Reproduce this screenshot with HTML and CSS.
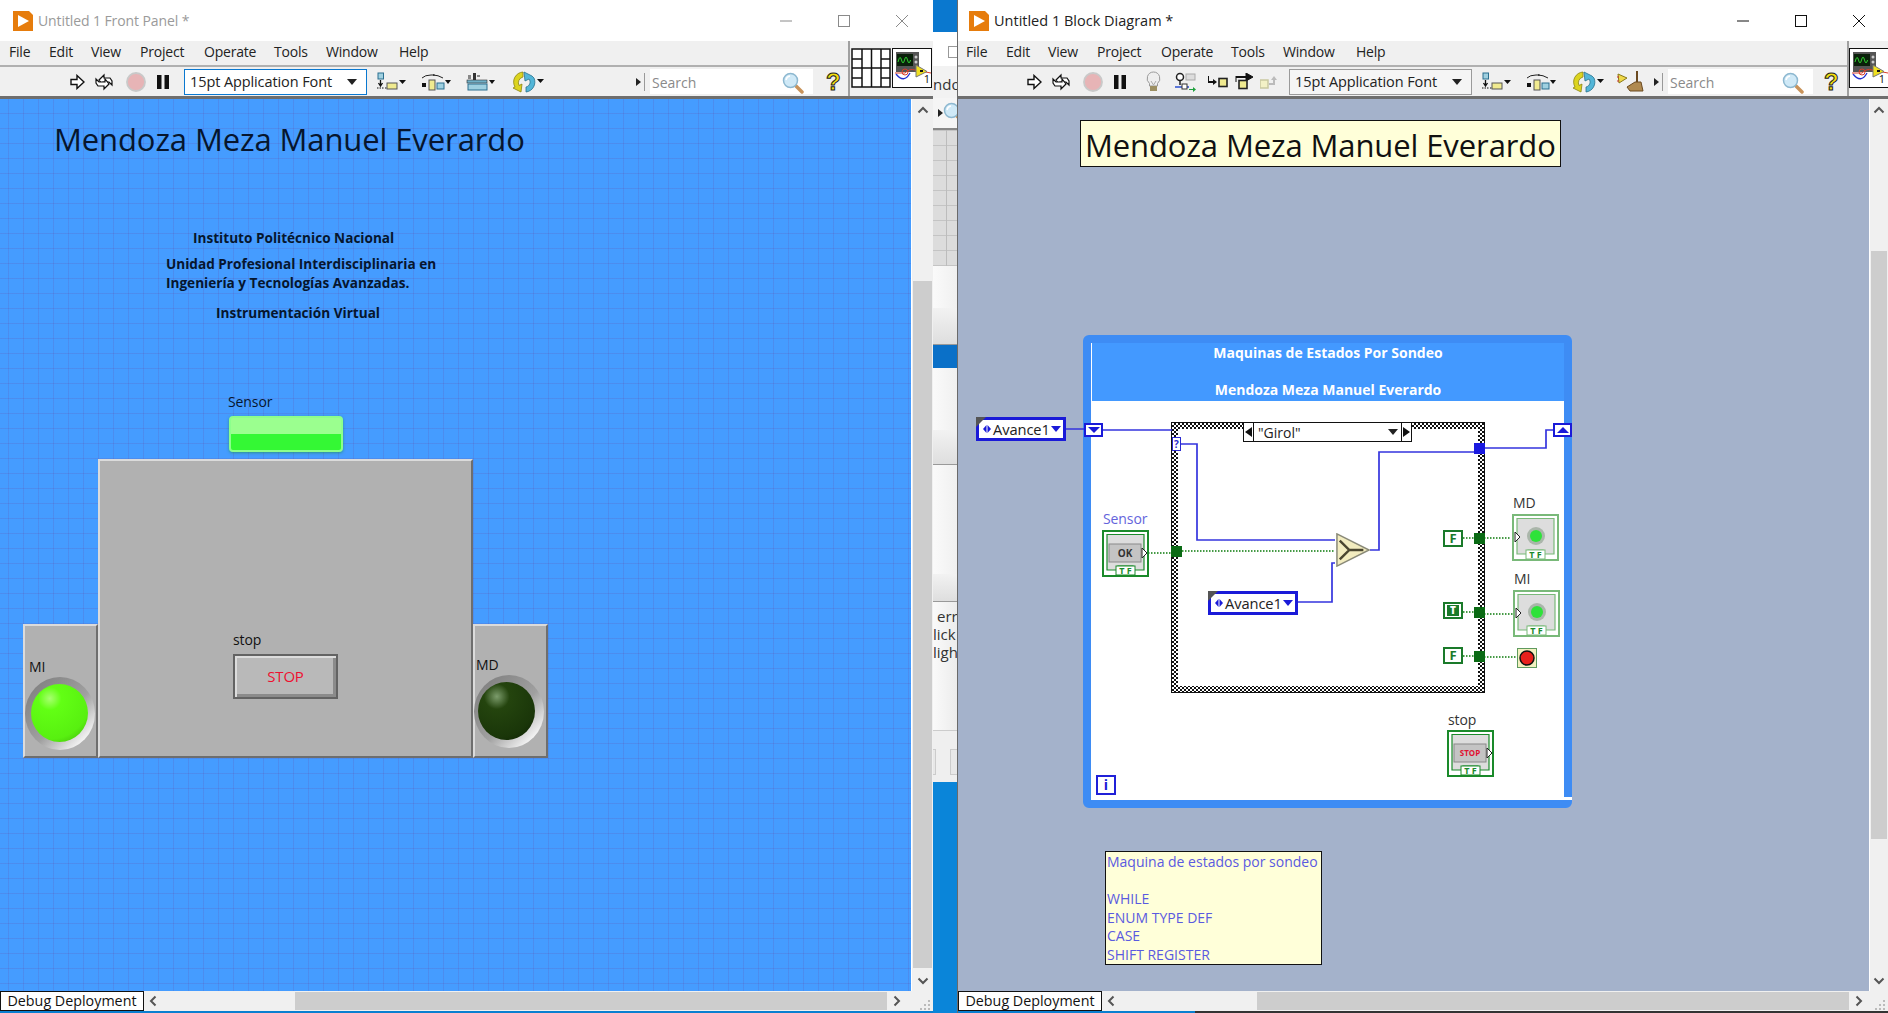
FILE: index.html
```html
<!DOCTYPE html>
<html lang="es">
<head>
    <meta charset="UTF-8">
    <title>Untitled 1</title>
    <link rel="stylesheet" href="styles.css">
</head>
<body>
    <!-- Iconos compartidos -->
    <svg class="defs">
        <symbol id="i-logo" viewBox="0 0 20 20"><path d="M0 0h16l4 4v16H0z" fill="#e67c0c"/><path d="M5 4l11 6-11 6z" fill="#fff"/></symbol>
        <symbol id="i-run" viewBox="0 0 15 16"><path d="M1 5.500h6V1.500l7 6.500-7 6.500v-4H1z" fill="#fff" stroke="#111" stroke-width="1.400"/></symbol>
        <symbol id="i-runc" viewBox="0 0 20 18"><path d="M5 7l5-5v3h6l2 3v4l-3-3H9v3z" fill="#fff" stroke="#111" stroke-width="1.200"/><path d="M15 11l-5 5v-3H4l-2-3V6l3 3h6v-3z" fill="#fff" stroke="#111" stroke-width="1.200"/></symbol>
        <symbol id="i-abort" viewBox="0 0 20 20"><circle cx="10" cy="10" r="9" fill="#e7b4b6" stroke="#c9c9c9" stroke-width="1.800"/></symbol>
        <symbol id="i-pause" viewBox="0 0 12 14"><path d="M0 0h4.500v14H0zM7.500 0H12v14H7.500z" fill="#111"/></symbol>
        <symbol id="i-align" viewBox="0 0 29 20"><rect x="1" y="1" width="5.500" height="6" fill="#9fd0e0" stroke="#2a6f8f"/><path d="M3.500 8v5M1.500 11l2 3 2-3" fill="none" stroke="#111" stroke-width="1.300"/><path d="M0 16h7M8 16h3" stroke="#111" stroke-dasharray="1.500 1"/><rect x="10" y="11" width="10" height="6" fill="#f0ea90" stroke="#555"/><path d="M22 8h7l-3.500 4z" fill="#111"/></symbol>
        <symbol id="i-dist" viewBox="0 0 30 20"><path d="M1 6q3-3 9-3t2 0q5 0 10 3" fill="none" stroke="#222"/><rect x="1" y="11" width="4" height="4" fill="#111"/><rect x="8" y="8" width="6" height="10" fill="#f0ea90" stroke="#555"/><rect x="16" y="11" width="7" height="6" fill="#9fd0e0" stroke="#2a6f8f"/><path d="M24 8h6l-3 4z" fill="#111"/></symbol>
        <symbol id="i-resize" viewBox="0 0 30 22"><rect x="7" y="2" width="3" height="7" fill="#333"/><rect x="1" y="9" width="20" height="3" fill="#6fb0c8" stroke="#333" stroke-width=".6"/><rect x="2" y="13" width="19" height="6" fill="#9fd0e0" stroke="#2a6f8f"/><path d="M23 9h6l-3 4z" fill="#111"/><path d="M2 5h3M11 5h3M2 7h3" stroke="#222"/></symbol>
        <symbol id="i-reorder" viewBox="0 0 32 22"><path d="M11 1A10 10 0 0 0 3 16l-2 1 8 4 1-8-3 1.500A6 6 0 0 1 11 6z" fill="#dcd41e" stroke="#8a8410" stroke-width=".8"/><path d="M12 1l8 4 2 2a10 10 0 0 1-8 14v-5a5 5 0 0 0 3-8l-4 2z" fill="#53b6d8" stroke="#27728e" stroke-width=".8"/><path d="M25 8h7l-3.500 4z" fill="#111"/></symbol>
        <symbol id="i-bulb" viewBox="0 0 15 21"><path d="M7.500 1a6.500 6.500 0 0 1 4 11.500V15h-8v-2.500A6.500 6.500 0 0 1 7.500 1z" fill="#eee" stroke="#999"/><path d="M5 10l2.500 4 2.500-4" fill="none" stroke="#aaa"/><rect x="4" y="15" width="7" height="5" fill="#9c8f62"/></symbol>
        <symbol id="i-retain" viewBox="0 0 21 20"><circle cx="5" cy="5" r="3.500" fill="#fff" stroke="#222" stroke-width="1.500"/><path d="M5 8.500V13" stroke="#222" stroke-width="1.500"/><rect x="11" y="2" width="9" height="6" fill="#ddd" stroke="#aaa"/><path d="M0 15h14" stroke="#2b4fd0" stroke-width="1.500"/><rect x="7" y="12" width="5" height="5" fill="#fff" stroke="#333"/><path d="M14 17h4v-2l3 2.500-3 2.500v-2h-4z" fill="#1ea03c"/></symbol>
        <symbol id="i-stepin" viewBox="0 0 20 14"><path d="M0 1v6h6" fill="none" stroke="#111" stroke-width="2"/><path d="M5 4v6l4-3z" fill="#111"/><rect x="11" y="3.500" width="8" height="8" fill="#f0ea90" stroke="#222" stroke-width="1.600"/></symbol>
        <symbol id="i-stepover" viewBox="0 0 19 17"><path d="M1 4h10" stroke="#111" stroke-width="2"/><path d="M1 3v6M11 0v8l7-4z" fill="#111" stroke="#111"/><rect x="4" y="7.500" width="8" height="8" fill="#f0ea90" stroke="#222" stroke-width="1.600"/></symbol>
        <symbol id="i-stepout" viewBox="0 0 20 14"><rect x="0" y="5" width="8" height="8" fill="#f3f1c6" stroke="#c9c8a0" stroke-width="1.500"/><path d="M9 9h5V4" fill="none" stroke="#bbb" stroke-width="2"/><path d="M11 5l3-4 3 4z" fill="#bbb"/></symbol>
        <symbol id="i-clean" viewBox="0 0 27 22"><path d="M1 3l9 4-8 5z" fill="#f0d848" stroke="#8a7a18"/><path d="M2 6l-2 0M2 10h-2" stroke="#c33"/><path d="M19 0h2v11h-2z" fill="#6b4a20"/><path d="M10 16l8-5h6l2 9H13z" fill="#b08a50" stroke="#6b4a20"/></symbol>
        <symbol id="i-mag" viewBox="0 0 22 22"><path d="M13 13l7 7" stroke="#c9935a" stroke-width="3.500" stroke-linecap="round"/><circle cx="8.500" cy="8.500" r="7" fill="#cfe9f7" stroke="#8db8d0" stroke-width="1.500"/><path d="M4 8a5 5 0 0 1 4-4" stroke="#fff" stroke-width="1.500" fill="none"/></symbol>
        <symbol id="i-left" viewBox="0 0 10 12"><path d="M7.500 1.500L3 6l4.500 4.500" fill="none" stroke="#555" stroke-width="2"/></symbol>
        <symbol id="i-right" viewBox="0 0 10 12"><path d="M2.500 1.500L7 6l-4.500 4.500" fill="none" stroke="#555" stroke-width="2"/></symbol>
        <symbol id="i-up" viewBox="0 0 12 10"><path d="M1.500 7.500L6 3l4.500 4.500" fill="none" stroke="#555" stroke-width="2"/></symbol>
        <symbol id="i-down" viewBox="0 0 12 10"><path d="M1.500 2.500L6 7l4.500-4.500" fill="none" stroke="#555" stroke-width="2"/></symbol>
        <symbol id="i-grip" viewBox="0 0 12 12"><path d="M9 1h2v2H9zM5 5h2v2H5zM9 5h2v2H9zM1 9h2v2H1zM5 9h2v2H5zM9 9h2v2H9z" fill="#bbb"/></symbol>
        <symbol id="i-vi" viewBox="0 0 40 40"><rect x=".5" y=".5" width="39" height="39" fill="#fff" stroke="#111"/><rect x="4" y="4" width="23" height="20" fill="#555"/><rect x="5" y="6" width="16" height="12" fill="#0a200a"/><path d="M6 14q2-8 3.500-2t3 0 3 0 3 0" fill="none" stroke="#2fd02f"/><circle cx="24" cy="9" r="1.500" fill="#ccc"/><circle cx="24" cy="14" r="1.500" fill="#ccc"/><path d="M4 26q8 10 14-1" fill="none" stroke="#2230d0" stroke-width="1.300"/><path d="M3 25h10q5-5 10-3l16 3" fill="none" stroke="#d8402a"/><circle cx="13" cy="24" r="3" fill="none" stroke="#d8402a"/><path d="M24 17l11 6.500L24 29z" fill="#f0e020" stroke="#777"/><path d="M28 22h3v2h-3z" fill="#111"/></symbol>
        <symbol id="i-cp" viewBox="0 0 40 40"><path d="M1 1h38v38H1zM11 1v38M20.500 1v38M30 1v38M1 20h38M1 11h10M1 30h10M30 11h9M30 30h9" fill="#fff" stroke="#111" stroke-width="1.500"/></symbol>
        <symbol id="i-frame" viewBox="0 0 47 47"><rect x="1" y="1" width="45" height="45" fill="#fff" stroke="currentColor" stroke-width="2"/><path d="M5 4.500h37V40H31v-4H16v4H5z" fill="#ddd" stroke="currentColor" stroke-width="1.200"/><rect x="14" y="36" width="19" height="9" fill="#fff" stroke="currentColor"/></symbol>
        <symbol id="i-enumarrows" viewBox="0 0 8 8"><path d="M3.500 0v8L0 4zM4.500 0v8L8 4z" fill="#1a1ad8"/></symbol>
    </svg>

    <!-- Front Panel -->
    <div class="window window-fp">
        <div class="titlebar">
            <svg class="logo"><use href="#i-logo"/></svg>
            <span class="title-text">Untitled 1 Front Panel *</span>
            <div class="win-controls">
                <svg width="14" height="14"><path d="M1 7h12" stroke="currentColor"/></svg>
                <svg width="14" height="14"><rect x="1.500" y="1.500" width="11" height="11" fill="none" stroke="currentColor"/></svg>
                <svg width="14" height="14"><path d="M1 1l12 12M13 1L1 13" stroke="currentColor"/></svg>
            </div>
        </div>
        <div class="head">
            <div class="head-main">
                <div class="menubar">
                    <span>File</span><span>Edit</span><span>View</span><span>Project</span><span>Operate</span><span>Tools</span><span>Window</span><span>Help</span>
                </div>
                <div class="toolbar">
                    <svg class="t-run"><use href="#i-run"/></svg>
                    <svg class="t-runc"><use href="#i-runc"/></svg>
                    <svg class="t-abort"><use href="#i-abort"/></svg>
                    <svg class="t-pause"><use href="#i-pause"/></svg>
                    <div class="ring ring-active"><span>15pt Application Font</span><i class="caret"></i></div>
                    <svg class="t-align"><use href="#i-align"/></svg>
                    <svg class="t-dist"><use href="#i-dist"/></svg>
                    <svg class="t-resize"><use href="#i-resize"/></svg>
                    <svg class="t-reorder"><use href="#i-reorder"/></svg>
                    <i class="more"></i>
                    <i class="divider"></i>
                    <div class="search"><span>Search</span><svg><use href="#i-mag"/></svg></div>
                    <span class="help">?</span>
                </div>
            </div>
            <div class="head-icons">
                <svg class="cp"><use href="#i-cp"/></svg>
                <svg class="vi"><use href="#i-vi"/></svg>
                <span class="vi-num">1</span>
            </div>
        </div>
        <div class="work">
            <div class="canvas panel">
                <div class="pn big-title">Mendoza Meza Manuel Everardo</div>
                <div class="pn info info-a">Instituto Politécnico Nacional</div>
                <div class="pn info info-b">Unidad Profesional Interdisciplinaria en<br>Ingeniería y Tecnologías Avanzadas.</div>
                <div class="pn info info-c">Instrumentación Virtual</div>

                <div class="pn lbl lbl-sensor">Sensor</div>
                <div class="pn sensor-btn"></div>

                <div class="pn box box-main"></div>
                <div class="pn box box-mi"></div>
                <div class="pn box box-md"></div>

                <div class="pn lbl lbl-stop">stop</div>
                <div class="pn stop-btn">STOP</div>

                <div class="pn led led-on led-mi"></div>
                <div class="pn lbl lbl-mi">MI</div>
                <div class="pn led led-off led-md"></div>
                <div class="pn lbl lbl-md">MD</div>
            </div>
            <div class="vscroll">
                <svg class="chev"><use href="#i-up"/></svg>
                <div class="vthumb"></div>
                <svg class="chev"><use href="#i-down"/></svg>
            </div>
        </div>
        <div class="bottombar">
            <div class="tab">Debug Deployment</div>
            <svg class="hchev"><use href="#i-left"/></svg>
            <div class="hthumb"></div>
            <svg class="hchev"><use href="#i-right"/></svg>
            <svg class="grip"><use href="#i-grip"/></svg>
        </div>
    </div>

    <!-- Ventana de atrás -->
    <div class="behind">
        <div class="bh bh-blue bh-h32"></div>
        <div class="bh bh-top"><i class="bh-max"></i></div>
        <div class="bh bh-ndo">ndo</div>
        <div class="bh bh-tools"><i class="more"></i><svg><use href="#i-mag"/></svg></div>
        <div class="bh bh-grid"></div>
        <div class="bh bh-white bh-h42"></div>
        <div class="bh bh-gray bh-h37"></div>
        <div class="bh bh-sel"></div>
        <div class="bh bh-white bh-h62"></div>
        <div class="bh bh-gray bh-h35"></div>
        <div class="bh bh-white bh-h109"></div>
        <div class="bh bh-gray bh-h28"></div>
        <div class="bh bh-text"><span class="t-err">err</span><span>lick</span><span>ligh</span></div>
        <div class="bh bh-btns"><i></i><i></i></div>
        <div class="bh bh-task"></div>
    </div>

    <!-- Block Diagram -->
    <div class="window window-bd">
        <div class="titlebar">
            <svg class="logo"><use href="#i-logo"/></svg>
            <span class="title-text">Untitled 1 Block Diagram *</span>
            <div class="win-controls">
                <svg width="14" height="14"><path d="M1 7h12" stroke="currentColor"/></svg>
                <svg width="14" height="14"><rect x="1.500" y="1.500" width="11" height="11" fill="none" stroke="currentColor"/></svg>
                <svg width="14" height="14"><path d="M1 1l12 12M13 1L1 13" stroke="currentColor"/></svg>
            </div>
        </div>
        <div class="head">
            <div class="head-main">
                <div class="menubar">
                    <span>File</span><span>Edit</span><span>View</span><span>Project</span><span>Operate</span><span>Tools</span><span>Window</span><span>Help</span>
                </div>
                <div class="toolbar">
                    <svg class="t-run"><use href="#i-run"/></svg>
                    <svg class="t-runc"><use href="#i-runc"/></svg>
                    <svg class="t-abort"><use href="#i-abort"/></svg>
                    <svg class="t-pause"><use href="#i-pause"/></svg>
                    <svg class="t-bulb"><use href="#i-bulb"/></svg>
                    <svg class="t-retain"><use href="#i-retain"/></svg>
                    <svg class="t-stepin"><use href="#i-stepin"/></svg>
                    <svg class="t-stepover"><use href="#i-stepover"/></svg>
                    <svg class="t-stepout"><use href="#i-stepout"/></svg>
                    <div class="ring"><span>15pt Application Font</span><i class="caret"></i></div>
                    <svg class="t-align"><use href="#i-align"/></svg>
                    <svg class="t-dist"><use href="#i-dist"/></svg>
                    <svg class="t-reorder"><use href="#i-reorder"/></svg>
                    <svg class="t-clean"><use href="#i-clean"/></svg>
                    <i class="more"></i>
                    <i class="divider"></i>
                    <div class="search"><span>Search</span><svg><use href="#i-mag"/></svg></div>
                    <span class="help">?</span>
                </div>
            </div>
            <div class="head-icons">
                <svg class="vi"><use href="#i-vi"/></svg>
                <span class="vi-num">1</span>
            </div>
        </div>
        <div class="work">
            <div class="canvas diagram">
                <div class="pn note-title">Mendoza Meza Manuel Everardo</div>

                <div class="pn loop">
                    <div class="loop-head">
                        <div>Maquinas de Estados Por Sondeo</div>
                        <div>Mendoza Meza Manuel Everardo</div>
                    </div>
                </div>
                <div class="pn loop-i">i</div>
                <div class="pn case"><div class="case-in"></div></div>

                <svg class="wires" viewBox="958 99 912 892">
                    <g class="wire-enum">
                        <path d="M1066 429h18M1103 430h69M1181 444h16v96h138M1370 550h9v-98h95M1484 448h62v-18h7M1298 602h34v-39h3"/>
                    </g>
                    <g class="wire-bool">
                        <path d="M1148 553h23M1182 551h153M1463 538h11M1484 538h27M1463 612h11M1484 614h29M1463 656h11M1484 657h33"/>
                    </g>
                </svg>

                <div class="pn sel"><i class="sel-l"></i><span>"Girol"</span><i class="caret"></i><i class="sel-r"></i></div>
                <div class="pn sel-term">?</div>

                <div class="pn enum enum-out"><svg><use href="#i-enumarrows"/></svg><span>Avance1</span><i class="caret caret-blue"></i></div>
                <div class="pn enum enum-in"><svg><use href="#i-enumarrows"/></svg><span>Avance1</span><i class="caret caret-blue"></i></div>

                <div class="pn sr sr-l"><i class="sr-down"></i></div>
                <div class="pn sr sr-r"><i class="sr-up"></i></div>

                <i class="pn tun tun-bool tun-sensor"></i>
                <i class="pn tun tun-enum tun-out"></i>
                <i class="pn tun tun-bool tun-f1"></i>
                <i class="pn tun tun-bool tun-t"></i>
                <i class="pn tun tun-bool tun-f2"></i>

                <div class="pn const c-f1">F</div>
                <div class="pn const const-t c-t"><b>T</b></div>
                <div class="pn const c-f2">F</div>

                <svg class="pn select-node" viewBox="0 0 36 36">
                    <path d="M1 1l34 17L1 35z" fill="#f2ecbf" stroke="#8a8a78" stroke-width="1.600"/>
                    <path d="M4 8l10 10-10 10M14 18h15" fill="none" stroke="#4a4630" stroke-width="2.600"/>
                </svg>

                <div class="pn lbl-bd lbl-bd-sensor">Sensor</div>
                <svg class="pn term term-ctl t-sensor"><use href="#i-frame"/><rect class="t-btn" x="7" y="14" width="32" height="18"/><text class="t-cap" x="23" y="27">OK</text><path class="t-arrow" d="M40 18l5 5-5 5z"/><text class="t-tf" x="23.500" y="44">T F</text></svg>

                <div class="pn lbl-bd lbl-bd-md">MD</div>
                <svg class="pn term term-ind t-md"><use href="#i-frame"/><circle class="t-halo" cx="24" cy="22" r="9"/><circle class="t-led" cx="24" cy="22" r="6"/><path class="t-arrow" d="M3 18l5 5-5 5z"/><text class="t-tf" x="23.500" y="44">T F</text></svg>

                <div class="pn lbl-bd lbl-bd-mi">MI</div>
                <svg class="pn term term-ind t-mi"><use href="#i-frame"/><circle class="t-halo" cx="24" cy="22" r="9"/><circle class="t-led" cx="24" cy="22" r="6"/><path class="t-arrow" d="M3 18l5 5-5 5z"/><text class="t-tf" x="23.500" y="44">T F</text></svg>

                <div class="pn lbl-bd lbl-bd-stop">stop</div>
                <svg class="pn term term-ctl t-stop"><use href="#i-frame"/><rect class="t-btn" x="7" y="14" width="32" height="18"/><text class="t-cap t-cap-red" x="23" y="26">STOP</text><path class="t-arrow" d="M40 18l5 5-5 5z"/><text class="t-tf" x="23.500" y="44">T F</text></svg>

                <svg class="pn stop-cond" viewBox="0 0 20 20">
                    <rect x=".5" y=".5" width="19" height="19" fill="#f3f1c0" stroke="#5f9a5f"/>
                    <circle cx="10" cy="10" r="7" fill="#e8201c" stroke="#111" stroke-width="1.500"/>
                </svg>

                <div class="pn comment">Maquina de estados por sondeo<br><br>WHILE<br>ENUM TYPE DEF<br>CASE<br>SHIFT REGISTER</div>
            </div>
            <div class="vscroll">
                <svg class="chev"><use href="#i-up"/></svg>
                <div class="vthumb"></div>
                <svg class="chev"><use href="#i-down"/></svg>
            </div>
        </div>
        <div class="bottombar">
            <div class="tab">Debug Deployment</div>
            <svg class="hchev"><use href="#i-left"/></svg>
            <div class="hthumb"></div>
            <svg class="hchev"><use href="#i-right"/></svg>
            <svg class="grip"><use href="#i-grip"/></svg>
        </div>
    </div>
</body>
</html>
```

FILE: styles.css
```css
* {
    box-sizing: border-box;
}

body {
    margin: 0;
    width: 1888px;
    height: 1013px;
    display: flex;
    overflow: hidden;
    background: #0a85d9;
    font-family: "Open Sans", "Noto Sans", sans-serif;
    color: #222;
}

.defs {
    display: none;
}

i {
    display: block;
}

/* Ventanas */
.window {
    display: flex;
    flex-direction: column;
    height: 1013px;
    padding-bottom: 2px;
    background: #fff;
}

.window-fp {
    width: 933px;
    background: linear-gradient(#fff 1011px, #0a7fd0 0);
}

.window-bd {
    width: 931px;
    border-left: 1px solid #6a6a6a;
    background: linear-gradient(90deg, #0a7fd0 237px, #333 0);
}

.titlebar {
    height: 41px;
    flex: none;
    display: flex;
    align-items: center;
    background: #fff;
}

.logo {
    width: 20px;
    height: 20px;
    margin-left: 13px;
}

.window-bd .logo {
    margin-left: 11px;
}

.title-text {
    margin-left: 5px;
    font-size: 14px;
    letter-spacing: -0.1px;
    color: #9a9a9a;
}

.window-bd .title-text {
    margin-left: 5px;
    font-size: 14.500px;
    letter-spacing: 0;
    color: #222;
}

.win-controls {
    margin-left: auto;
    display: flex;
    gap: 44px;
    padding-right: 24px;
    color: #8a8a8a;
}

.window-bd .win-controls {
    padding-right: 22px;
    color: #111;
}

.head {
    height: 58px;
    flex: none;
    display: flex;
    background: #f0f0f0;
    border-bottom: 3px solid #6e6e6e;
}

.head-main {
    flex: 1;
    min-width: 0;
}

.menubar {
    height: 26px;
    padding: 0 0 4px 9px;
    display: grid;
    grid-template-columns: 40px 42px 49px 64px 70px 52px 73px auto;
    align-items: center;
    font-size: 14px;
    letter-spacing: -0.2px;
    border-bottom: 2px solid #b0b0b0;
}

.window-bd .menubar {
    padding-left: 8px;
}

.toolbar {
    height: 29px;
    display: flex;
    align-items: center;
    padding-left: 70px;
}

.window-bd .toolbar {
    padding-left: 69px;
}

.toolbar svg {
    flex: none;
}

.t-run { width: 15px; height: 16px; }
.t-runc { width: 20px; height: 18px; margin-left: 9px; }
.t-abort { width: 20px; height: 20px; margin-left: 12px; }
.t-pause { width: 12px; height: 14px; margin-left: 11px; }
.t-bulb { width: 15px; height: 21px; margin-left: 20px; }
.t-retain { width: 21px; height: 20px; margin-left: 14px; }
.t-stepin { width: 20px; height: 14px; margin-left: 12px; }
.t-stepover { width: 19px; height: 17px; margin-left: 7px; }
.t-stepout { width: 20px; height: 14px; margin-left: 6px; }
.t-align { width: 29px; height: 20px; margin-left: 10px; }
.t-dist { width: 30px; height: 20px; margin-left: 15px; }
.t-resize { width: 30px; height: 22px; margin-left: 15px; }
.t-reorder { width: 32px; height: 22px; margin-left: 16px; }
.t-clean { width: 27px; height: 22px; margin-left: 13px; }

.ring {
    width: 183px;
    height: 26px;
    margin-left: 15px;
    padding: 0 9px 0 5px;
    display: flex;
    align-items: center;
    justify-content: space-between;
    background: #f5f5f5;
    border: 1px solid #9a9a9a;
    font-size: 14.500px;
    letter-spacing: -0.1px;
    white-space: nowrap;
}

.window-bd .ring {
    margin-left: 9px;
}

.ring-active {
    background: #fff;
    border-color: #0a78d0;
}

.caret {
    width: 0;
    height: 0;
    flex: none;
    border-left: 5px solid transparent;
    border-right: 5px solid transparent;
    border-top: 6px solid #222;
}

.caret-blue {
    border-top-color: #1a1ad8;
}

.more {
    width: 0;
    height: 0;
    margin-left: 92px;
    border-top: 4px solid transparent;
    border-bottom: 4px solid transparent;
    border-left: 5px solid #222;
}

.window-bd .toolbar .more {
    margin-left: 10px;
}

.divider {
    width: 1px;
    height: 18px;
    margin-left: 3px;
    background: #999;
}

.search {
    width: 163px;
    height: 25px;
    margin-left: 5px;
    padding: 2px 9px 0 2px;
    display: flex;
    align-items: center;
    justify-content: space-between;
    background: #fff;
    font-size: 14px;
    color: #8a8a8a;
}

.search svg {
    width: 22px;
    height: 22px;
}

.window-bd .search {
    width: 145px;
}

.help {
    margin-left: 13px;
    font-family: "Liberation Sans", sans-serif;
    font-weight: bold;
    font-size: 24px;
    line-height: 26px;
    color: #f4e010;
    -webkit-text-stroke: 1px #222;
}

.window-bd .help {
    margin-left: 11px;
}

.head-icons {
    position: relative;
    width: 85px;
    flex: none;
    display: flex;
    align-items: flex-start;
    gap: 1px;
    padding: 7px 0 0 1px;
    border-left: 2px solid #a0a0a0;
}

.window-bd .head-icons {
    width: 41px;
    padding-left: 0;
}

.cp, .vi {
    width: 40px;
    height: 40px;
    flex: none;
}

.vi-num {
    position: absolute;
    right: 3px;
    top: 31px;
    font-size: 11px;
    line-height: 14px;
    color: #111;
}

/* Lienzo y barras */
.work {
    flex: 1;
    min-height: 0;
    display: flex;
}

.canvas {
    position: relative;
    flex: 1;
    min-width: 0;
    overflow: hidden;
    border-right: 1px solid #fff;
}

.panel {
    background-color: #459cff;
    background-image:
        linear-gradient(90deg, rgba(95, 95, 190, 0.25) 1px, transparent 1px),
        linear-gradient(rgba(95, 95, 190, 0.25) 1px, transparent 1px);
    background-size: 15px 15px;
    background-position: 8px 14px;
}

.diagram {
    background: #a4b2cb;
}

.vscroll {
    width: 21px;
    flex: none;
    display: flex;
    flex-direction: column;
    align-items: center;
    background: #f0f0f0;
    padding-top: 6px;
}

.window-bd .vscroll {
    width: 18px;
}

.chev {
    width: 12px;
    height: 10px;
    flex: none;
}

.vthumb {
    flex: none;
    width: 19px;
    height: 687px;
    margin-top: 166px;
    background: #cdcdcd;
}

.window-bd .vthumb {
    width: 16px;
    height: 588px;
    margin-top: 136px;
}

.window-fp .vscroll .chev:last-child {
    margin-top: 8px;
}

.window-bd .vscroll .chev:last-child {
    margin-top: 137px;
}

.bottombar {
    height: 20px;
    flex: none;
    display: flex;
    align-items: center;
    background: #f0f0f0;
}

.tab {
    width: 144px;
    height: 20px;
    flex: none;
    border: 1px solid #111;
    background: #fff;
    font-size: 14.300px;
    line-height: 18px;
    text-align: center;
    white-space: nowrap;
    color: #111;
}

.hchev {
    width: 10px;
    height: 12px;
    flex: none;
    margin-left: 4px;
}

.hthumb {
    width: 592px;
    height: 18px;
    flex: none;
    margin-left: 137px;
    background: #cdcdcd;
}

.window-bd .hthumb {
    margin-left: 141px;
}

.hthumb + .hchev {
    margin-left: 5px;
}

.grip {
    width: 12px;
    height: 12px;
    margin-left: auto;
    margin-right: 2px;
    align-self: flex-end;
}

/* Ventana de atrás */
.behind {
    width: 24px;
    height: 1013px;
    flex: none;
    display: flex;
    flex-direction: column;
    overflow: hidden;
    background: #f5f5f5;
}

.bh {
    flex: none;
}

.bh-blue { background: #0a78cf; }
.bh-h32 { height: 32px; }
.bh-h42 { height: 42px; }
.bh-h37 { height: 37px; }
.bh-h62 { height: 62px; }
.bh-h35 { height: 35px; }
.bh-h109 { height: 109px; }
.bh-h28 { height: 28px; }

.bh-top {
    height: 34px;
    padding: 14px 0 0 15px;
    background: #fff;
}

.bh-max {
    width: 12px;
    height: 12px;
    border: 1px solid #999;
}

.bh-ndo {
    height: 32px;
    font-size: 15px;
    line-height: 36px;
    color: #333;
    background: #f2f2f2;
    white-space: nowrap;
}

.bh-tools {
    height: 32px;
    display: flex;
    align-items: center;
    border-bottom: 2px solid #888;
}

.bh-tools .more {
    margin-left: 5px;
    flex: none;
}

.bh-tools svg {
    width: 22px;
    height: 22px;
    flex: none;
}

.bh-grid {
    height: 136px;
    background-color: #dcdcdc;
    background-image:
        linear-gradient(90deg, #bcbcbc 1px, transparent 1px),
        linear-gradient(#c4c4c4 1px, transparent 1px);
    background-size: 14px 15px;
    background-position: 13px 0;
}

.bh-white {
    background: linear-gradient(90deg, #fafafa, #f0f0f0);
}

.bh-gray {
    background: linear-gradient(#f2f2f2, #dedede);
    border-bottom: 1px solid #999;
}

.bh-sel {
    height: 23px;
    background: #0a70c8;
}

.bh-text {
    height: 128px;
    padding-top: 5px;
    display: flex;
    flex-direction: column;
    font-size: 15px;
    line-height: 18px;
    color: #333;
    background: linear-gradient(90deg, #fafafa, #ececec);
    white-space: nowrap;
}

.t-err {
    padding-left: 4px;
}

.bh-btns {
    height: 52px;
    padding-top: 18px;
    display: flex;
    gap: 14px;
    background: #efefef;
    border-top: 1px solid #ccc;
}

.bh-btns i {
    width: 3px;
    height: 26px;
    border: 1px solid #ccc;
    border-left: 0;
    background: #e8e8e8;
}

.bh-btns i + i {
    width: 8px;
    border-left: 1px solid #ccc;
    border-right: 0;
}

.bh-task {
    flex: 1;
    background: #0a85d9;
}

/* Elementos sobre el lienzo */
.pn {
    position: absolute;
}

.big-title {
    left: 54px;
    top: 18px;
    font-size: 31px;
    line-height: 44px;
    letter-spacing: -0.1px;
    color: #06162e;
    white-space: nowrap;
}

.info {
    font-weight: 700;
    font-size: 13.600px;
    line-height: 19px;
    color: #06162e;
    white-space: nowrap;
}

.info-a { left: 193px; top: 129px; }
.info-b { left: 166px; top: 155px; }
.info-c { left: 216px; top: 204px; }

.lbl {
    font-size: 14px;
    line-height: 18px;
    letter-spacing: -0.1px;
    color: #111;
}

.lbl-sensor { left: 228px; top: 294px; color: #06162e; }
.lbl-stop { left: 233px; top: 532px; }
.lbl-mi { left: 29px; top: 559px; }
.lbl-md { left: 476px; top: 557px; }

.sensor-btn {
    left: 229px;
    top: 317px;
    width: 114px;
    height: 36px;
    border: 2px solid #8cff8c;
    border-radius: 4px;
    background: linear-gradient(#9bff8f 50%, #34f834 50%);
    box-shadow: 0 1px 3px rgba(30, 140, 60, 0.6);
}

.box {
    background: #b1b1b1;
    border: 2px solid #6e6e6e;
    border-top-color: #dbdbdb;
    border-left-color: #dbdbdb;
}

.box-main { left: 98px; top: 360px; width: 375px; height: 299px; }
.box-mi { left: 23px; top: 525px; width: 75px; height: 134px; }
.box-md { left: 473px; top: 525px; width: 75px; height: 134px; }

.stop-btn {
    left: 233px;
    top: 555px;
    width: 105px;
    height: 45px;
    border: 2px solid #636363;
    background: #b9b9b9;
    box-shadow: inset 2px 2px 0 #dcdcdc, inset -3px -3px 0 #8b8b8b;
    font-size: 15px;
    line-height: 41px;
    letter-spacing: -0.2px;
    text-align: center;
    color: #ee1030;
}

.led {
    width: 70px;
    height: 73px;
    border-radius: 50%;
    background: linear-gradient(135deg, #7a7a7a, #a0a0a0 55%, #f2f2f2 85%);
}

.led::after {
    content: '';
    position: absolute;
    left: 6px;
    top: 7px;
    width: 57px;
    height: 58px;
    border-radius: 50%;
}

.led-on::after {
    background: radial-gradient(circle at 33% 25%, #a8ff70 0, #62ff14 20%, #58f010 70%, #3ca808 100%);
}

.led-off::after {
    background: radial-gradient(circle at 33% 25%, #7c9c6c 0, #24440e 22%, #1a3609 70%, #0c1c03 100%);
}

.led-mi { left: 25px; top: 578px; }
.led-md { left: 474px; top: 576px; }

.led-md::after {
    left: 4px;
}

/* Diagrama */
.note-title {
    left: 122px;
    top: 21px;
    width: 481px;
    height: 47px;
    padding-left: 4px;
    border: 1.500px solid #111;
    background: #ffffd9;
    font-size: 31px;
    line-height: 48px;
    letter-spacing: -0.1px;
    color: #111;
    white-space: nowrap;
}

.loop {
    left: 125px;
    top: 236px;
    width: 489px;
    height: 473px;
    border: 8px solid #3e8cf4;
    border-radius: 6px;
    background: #fff;
}

.loop::after {
    content: '';
    position: absolute;
    right: -8px;
    bottom: 0;
    width: 8px;
    height: 3px;
    background: #fff;
}

.loop-head {
    height: 58px;
    margin-left: 1px;
    background: #4399ff;
    display: flex;
    flex-direction: column;
    justify-content: space-between;
    padding-bottom: 1px;
    font-weight: 700;
    font-size: 14px;
    line-height: 20px;
    text-align: center;
    white-space: nowrap;
    color: #fff;
}

.loop-i {
    left: 138px;
    top: 676px;
    width: 20px;
    height: 20px;
    border: 2px solid #2020d8;
    background: #fff;
    font-size: 14px;
    font-weight: 700;
    line-height: 16px;
    text-align: center;
    color: #1a1ad8;
}

.case {
    left: 213px;
    top: 323px;
    width: 314px;
    height: 271px;
    padding: 6px;
    border: 1px solid #111;
    background: conic-gradient(#111 25%, #fff 0 50%, #111 0 75%, #fff 0) 0 0 / 4px 4px;
}

.case-in {
    height: 100%;
    background: #fff;
}

.wires {
    position: absolute;
    left: 0;
    top: 0;
    width: 912px;
    height: 892px;
    fill: none;
}

.wire-enum {
    stroke: #3434de;
    stroke-width: 1.700;
}

.wire-bool {
    stroke: #0a7a0a;
    stroke-width: 1.500;
    stroke-dasharray: 1.500 1.500;
}

.sel {
    left: 285px;
    top: 323px;
    width: 169px;
    height: 20px;
    display: flex;
    align-items: center;
    border: 1.500px solid #111;
    background: #fff;
    font-size: 14px;
}

.sel span {
    margin-left: 4px;
    flex: 1;
}

.sel-l, .sel-r {
    position: relative;
    width: 10px;
    height: 100%;
    flex: none;
    border-right: 1.500px solid #111;
}

.sel-r {
    margin-left: 3px;
    border-right: 0;
    border-left: 1.500px solid #111;
}

.sel-l::after, .sel-r::after {
    content: '';
    position: absolute;
    top: 4px;
    left: 1px;
    border-top: 5px solid transparent;
    border-bottom: 5px solid transparent;
    border-right: 7px solid #111;
}

.sel-r::after {
    left: 1px;
    border-right: 0;
    border-left: 7px solid #111;
}

.sel-term {
    left: 214px;
    top: 338px;
    width: 9px;
    height: 14px;
    border: 1px solid #2a2ad0;
    background: #fff;
    font-size: 10px;
    font-weight: 700;
    line-height: 12px;
    text-align: center;
    color: #2a2ad0;
}

.enum {
    display: flex;
    align-items: center;
    height: 24px;
    width: 90px;
    padding: 0 2px 0 4px;
    border: 3px solid #1a1ad8;
    background: #fff;
    font-size: 14.700px;
    letter-spacing: -0.1px;
    color: #222;
}

.enum::before {
    content: '';
    position: absolute;
    left: -3px;
    top: -3px;
    border-top: 10px solid #555;
    border-right: 10px solid transparent;
}

.enum svg {
    width: 8px;
    height: 8px;
    flex: none;
    margin-right: 2px;
}

.enum span {
    flex: 1;
}

.enum-out { left: 18px; top: 318px; }
.enum-in { left: 250px; top: 492px; }

.sr {
    width: 19px;
    height: 14px;
    border: 2px solid #1a1ad8;
    background: #fff;
    display: flex;
    align-items: center;
    justify-content: center;
}

.sr-l { left: 126px; top: 324px; }
.sr-r { left: 595px; top: 324px; }

.sr-down, .sr-up {
    width: 0;
    height: 0;
    border-left: 6px solid transparent;
    border-right: 6px solid transparent;
    border-top: 6px solid #1a1ad8;
}

.sr-up {
    border-top: 0;
    border-bottom: 6px solid #1a1ad8;
}

.tun {
    width: 11px;
    height: 11px;
}

.tun-bool { background: #0a6a14; }
.tun-enum { background: #1a1ae0; }
.tun-sensor { left: 213px; top: 447px; }
.tun-out { left: 516px; top: 344px; }
.tun-f1 { left: 516px; top: 434px; }
.tun-t { left: 516px; top: 508px; }
.tun-f2 { left: 516px; top: 552px; }

.const {
    width: 20px;
    height: 17px;
    border: 2px solid #1a7a2a;
    background: #fff;
    font-size: 13px;
    font-weight: 700;
    line-height: 13px;
    text-align: center;
    color: #1a7a2a;
}

.const-t b {
    display: block;
    margin: 1px 2px;
    background: #1a7a2a;
    color: #fff;
    font-size: 10px;
    line-height: 11px;
}

.c-f1 { left: 485px; top: 431px; }
.c-t { left: 485px; top: 503px; }
.c-f2 { left: 485px; top: 548px; }

.select-node {
    left: 377px;
    top: 434px;
    width: 36px;
    height: 34px;
}

.lbl-bd {
    font-size: 14px;
    line-height: 18px;
    letter-spacing: -0.1px;
    color: #333;
}

.lbl-bd-sensor { left: 145px; top: 411px; color: #6464dc; }
.lbl-bd-md { left: 555px; top: 395px; }
.lbl-bd-mi { left: 556px; top: 471px; }
.lbl-bd-stop { left: 490px; top: 612px; }

.term {
    width: 47px;
    height: 47px;
}

.term-ctl { color: #1a8a2a; }
.term-ind { color: #79b979; }

.t-sensor { left: 144px; top: 431px; }
.t-md { left: 554px; top: 415px; }
.t-mi { left: 555px; top: 491px; }
.t-stop { left: 489px; top: 631px; }

.t-btn {
    fill: #c4c4c4;
    stroke: #8a8a8a;
}

.t-cap {
    font-size: 10px;
    font-weight: 700;
    text-anchor: middle;
    fill: #333;
}

.t-cap-red {
    font-size: 8px;
    fill: #e01030;
}

.t-arrow {
    fill: #fff;
    stroke: #222;
}

.t-tf {
    font-size: 9px;
    font-weight: 700;
    text-anchor: middle;
    fill: #1a8a2a;
}

.t-halo { fill: #aab6aa; }
.t-led { fill: #2ee23a; }

.stop-cond {
    left: 559px;
    top: 549px;
    width: 20px;
    height: 20px;
}

.comment {
    left: 147px;
    top: 752px;
    width: 217px;
    height: 114px;
    padding: 1px 0 0 1px;
    border: 1.500px solid #111;
    background: #ffffd9;
    font-size: 14px;
    line-height: 18.600px;
    color: #5a5ae0;
    white-space: nowrap;
}
```
